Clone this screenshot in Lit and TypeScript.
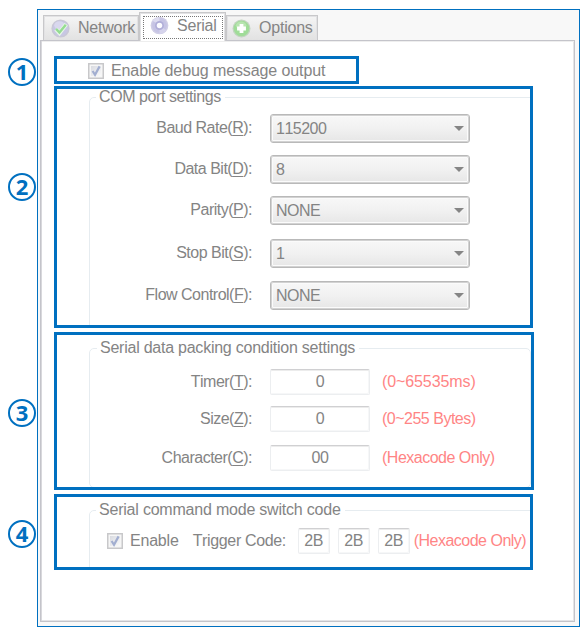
import { LitElement, html, css, svg } from "lit";
import { customElement, property } from "lit/decorators.js";

const textStyles = css`
  :host {
    font: 16px/18px "Liberation Sans", Arial, sans-serif;
    font-kerning: none;
    letter-spacing: -0.5px;
    color: #848484;
    white-space: nowrap;
  }
  * {
    box-sizing: border-box;
  }
`;

@customElement("check-box")
class CheckBox extends LitElement {
  static styles = css`
    :host {
      display: block;
      width: 16px;
      height: 16px;
      flex: none;
    }
    svg {
      display: block;
    }
  `;
  render() {
    return html`<svg width="16" height="16" viewBox="0 0 16 16">
      <defs>
        <linearGradient id="well" x1="0" y1="0" x2="1" y2="1">
          <stop offset="0" stop-color="#d8dae0" />
          <stop offset="1" stop-color="#fafafa" />
        </linearGradient>
      </defs>
      <rect x=".75" y=".75" width="14.5" height="14.5" fill="#f6f6f6" stroke="#c8c8ca" stroke-width="1.5" />
      <rect x="3" y="3" width="10" height="10" fill="url(#well)" />
      <path d="M4.6 8 L7 11.8 L11.6 3.4" fill="none" stroke="#a2aed0" stroke-width="2.2" />
    </svg>`;
  }
}

@customElement("combo-box")
class ComboBox extends LitElement {
  @property() value = "";
  static styles = [
    textStyles,
    css`
      :host {
        display: block;
      }
      .combo {
        width: 200px;
        height: 29px;
        border: 1px solid #b9b9b9;
        outline: 1px solid #d2d2d2;
        outline-offset: -2px;
        border-radius: 3px;
        background: linear-gradient(#f8f8f8, #f1f1f1 50%, #e6e6e6);
        box-shadow: inset 0 0 0 2px #fbfbfb;
        display: flex;
        align-items: center;
        justify-content: space-between;
        padding: 0 5px 0 5px;
      }
      .arrow {
        border: 5px solid transparent;
        border-top-color: #858585;
        border-bottom: 0;
      }
    `,
  ];
  render() {
    return html`<div class="combo"><span>${this.value}</span><span class="arrow"></span></div>`;
  }
}

const checkIcon = svg`
  <circle cx="9" cy="9" r="8.6" fill="#c9c8d6"/>
  <circle cx="9" cy="9" r="7.2" fill="#c8c7e4"/>
  <ellipse cx="8" cy="6" rx="5" ry="3.8" fill="#d9d8ee"/>
  <path d="M4.6 9.6 L8 13.2 L14.4 5" fill="none" stroke="#e8f8e6" stroke-width="4"/>
  <path d="M4.8 9.4 L8 12.8 L14 5.4" fill="none" stroke="#95dc92" stroke-width="2.3"/>`;
const discIcon = svg`
  <circle cx="9" cy="9" r="8.4" fill="#d0cee6"/>
  <circle cx="9" cy="9" r="7" fill="#c6c4e4"/>
  <path d="M9 9 L2.6 4.6 A7.8 7.8 0 0 1 9 1.2 Z" fill="#dddcf0"/>
  <path d="M9 9 L15.4 13.4 A7.8 7.8 0 0 1 9 16.8 Z" fill="#d6d4ec"/>
  <circle cx="9" cy="9" r="4.2" fill="#b0aed8"/>
  <circle cx="9" cy="9" r="2.6" fill="#fbfbff"/>`;
const plusIcon = svg`
  <circle cx="9" cy="9" r="8.5" fill="#c2d4c0"/>
  <circle cx="9" cy="9" r="7.4" fill="#a0dc98"/>
  <ellipse cx="8.6" cy="6" rx="5" ry="3.6" fill="#b8e4b0"/>
  <path d="M9 4.8 V13.2 M4.8 9 H13.2" stroke="#fff" stroke-width="3.6"/>`;

const ports = [
  { pre: "Baud Rate", key: "R", value: "115200" },
  { pre: "Data Bit", key: "D", value: "8" },
  { pre: "Parity", key: "P", value: "NONE" },
  { pre: "Stop Bit", key: "S", value: "1" },
  { pre: "Flow Control", key: "F", value: "NONE" },
];
const packing = [
  { pre: "Timer", key: "T", value: "0", hint: "(0~65535ms)", cls: "wide" },
  { pre: "Size", key: "Z", value: "0", hint: "(0~255 Bytes)", cls: "" },
  { pre: "Character", key: "C", value: "00", hint: "(Hexacode Only)", cls: "" },
];

@customElement("app-root")
class AppRoot extends LitElement {
  static styles = [
    textStyles,
    css`
      :host {
        display: block;
        width: 586px;
        height: 634px;
        background: #fff;
        overflow: hidden;
      }
      .page {
        display: grid;
        grid-template-columns: 37px 543px;
      }
      .markers {
        display: grid;
        grid-template-rows: 115px 226px 121px 28px;
        padding: 58px 0 0 8px;
      }
      .marker {
        width: 28px;
        height: 28px;
        border: 2px solid #0070c0;
        border-radius: 50%;
        color: #0070c0;
        font: bold 22px/23px "Noto Sans", sans-serif;
        letter-spacing: 0;
        text-align: center;
      }
      .window {
        margin-top: 9px;
        height: 618px;
        border: 1px solid #0070c0;
        background: #f8f8f8;
        padding: 2px 4px 4px 2px;
      }
      .tabs {
        display: flex;
        align-items: flex-end;
        height: 28px;
        padding-left: 3px;
      }
      .tab {
        height: 25px;
        border: 1px solid #c8c8ca;
        border-bottom: 0;
        box-shadow: inset 1px 1px #e2e2e4, inset -1px 0 #e2e2e4;
        background: linear-gradient(#f5f5f5, #ececec 45%, #e2e2e2);
        display: flex;
        align-items: center;
        gap: 8px;
        padding: 0 0 0 7px;
        letter-spacing: -0.22px;
      }
      .tab svg {
        flex: none;
      }
      .network { width: 96px; }
      .options { width: 92px; padding-left: 5px; }
      .serial {
        width: 87px;
        height: 29px;
        margin-bottom: -1px;
        background: #fff;
        padding: 0 2px 2px 3px;
        z-index: 1;
      }
      .focus {
        width: 80px;
        height: 23px;
        margin-top: 2px;
        border: 1px dotted #777;
        display: flex;
        align-items: center;
        gap: 8px;
        padding: 0 0 3px 6px;
      }
      .panel {
        height: 582px;
        border: 1px solid #c4c4ca;
        box-shadow: inset 1px 0 #d8d8dc, inset 0 1px #eee, inset -1px -1px #e4e4e6;
        background: #fff;
        padding: 15px 0 0 13px;
      }
      .callout {
        border: 3px solid #0070c0;
        overflow: hidden;
      }
      .debug {
        width: 305px;
        height: 28px;
        display: flex;
        align-items: center;
        gap: 7px;
        padding: 1px 0 0 31px;
        letter-spacing: -0.1px;
      }
      .com { width: 479px; height: 242px; margin-top: 2px; }
      .packing { width: 480px; height: 158px; margin-top: 4px; }
      .command { width: 479px; height: 76px; margin-top: 4px; }
      fieldset {
        min-width: 0;
        margin: 0 0 0 32px;
        padding: 0;
        border: 1px solid #e6ecf0;
        border-radius: 5px;
      }
      legend {
        margin-left: 6px;
        padding: 0 4px 0 3px;
        height: 18px;
        letter-spacing: -0.42px;
      }
      .com fieldset { width: 460px; height: 260px; margin-top: -1px; }
      .packing fieldset { width: 442px; height: 149px; margin-top: 4px; }
      .command fieldset { width: 460px; height: 100px; margin-top: 4px; }
      .packing legend { letter-spacing: -0.24px; margin-left: 7px; }
      .command legend { letter-spacing: -0.21px; }
      .rows {
        display: grid;
        grid-template-columns: 162px 200px;
        column-gap: 18px;
      }
      .com .rows { grid-template-rows: 41px 41px 43px 42px 29px; padding-top: 8px; }
      .packing .rows {
        grid-template-columns: 162px 100px auto;
        grid-template-rows: 37px 39px 26px;
        padding-top: 12px;
      }
      .label { text-align: right; line-height: 27px; }
      .packing .label, .hint { line-height: 26px; }
      .key {
        text-decoration: underline 1px;
        text-underline-offset: 2px;
        text-decoration-skip-ink: none;
      }
      .field {
        height: 26px;
        border: 1px solid #eceef0;
        border-top-color: #d0d0d2;
        border-radius: 2px;
        box-shadow: inset 0 1px #ececec, inset -1px -1px #f6f7f8;
        line-height: 24px;
        text-align: center;
      }
      .hint { color: #ff8585; }
      .packing .hint { margin-left: -6px; }
      .packing .wide { letter-spacing: -0.1px; }
      .trigger {
        display: flex;
        align-items: center;
        height: 26px;
        margin: 9px 0 0 17px;
      }
      .enable { margin: 0 14px 0 7px; letter-spacing: -0.2px; }
      .code-label { width: 105px; letter-spacing: -0.35px; }
      .code { width: 32px; margin-right: 8px; letter-spacing: -0.4px; }
      .trigger .hint { margin-left: -4px; }
    `,
  ];

  label(pre: string, key: string) {
    return html`<div class="label">${pre}(<span class="key">${key}</span>):</div>`;
  }

  icon(shape: unknown) {
    return html`<svg width="19" height="19" viewBox="0 0 18 18">${shape}</svg>`;
  }

  render() {
    return html`<div class="page">
      <div class="markers">
        ${[1, 2, 3, 4].map((n) => html`<div class="marker">${n}</div>`)}
      </div>
      <div class="window">
        <div class="tabs">
          <div class="tab network">${this.icon(checkIcon)}<span>Network</span></div>
          <div class="tab serial">
            <div class="focus">${this.icon(discIcon)}<span>Serial</span></div>
          </div>
          <div class="tab options">${this.icon(plusIcon)}<span>Options</span></div>
        </div>
        <div class="panel">
          <div class="callout debug">
            <check-box></check-box><span>Enable debug message output</span>
          </div>
          <div class="callout com">
            <fieldset>
              <legend>COM port settings</legend>
              <div class="rows">
                ${ports.map((p) => html`${this.label(p.pre, p.key)}<combo-box .value=${p.value}></combo-box>`)}
              </div>
            </fieldset>
          </div>
          <div class="callout packing">
            <fieldset>
              <legend>Serial data packing condition settings</legend>
              <div class="rows">
                ${packing.map(
                  (p) => html`${this.label(p.pre, p.key)}
                    <div class="field">${p.value}</div>
                    <div class="hint ${p.cls}">${p.hint}</div>`
                )}
              </div>
            </fieldset>
          </div>
          <div class="callout command">
            <fieldset>
              <legend>Serial command mode switch code</legend>
              <div class="trigger">
                <check-box></check-box>
                <span class="enable">Enable</span>
                <span class="code-label">Trigger Code:</span>
                ${["2B", "2B", "2B"].map((c) => html`<div class="field code">${c}</div>`)}
                <span class="hint">(Hexacode Only)</span>
              </div>
            </fieldset>
          </div>
        </div>
      </div>
    </div>`;
  }
}
